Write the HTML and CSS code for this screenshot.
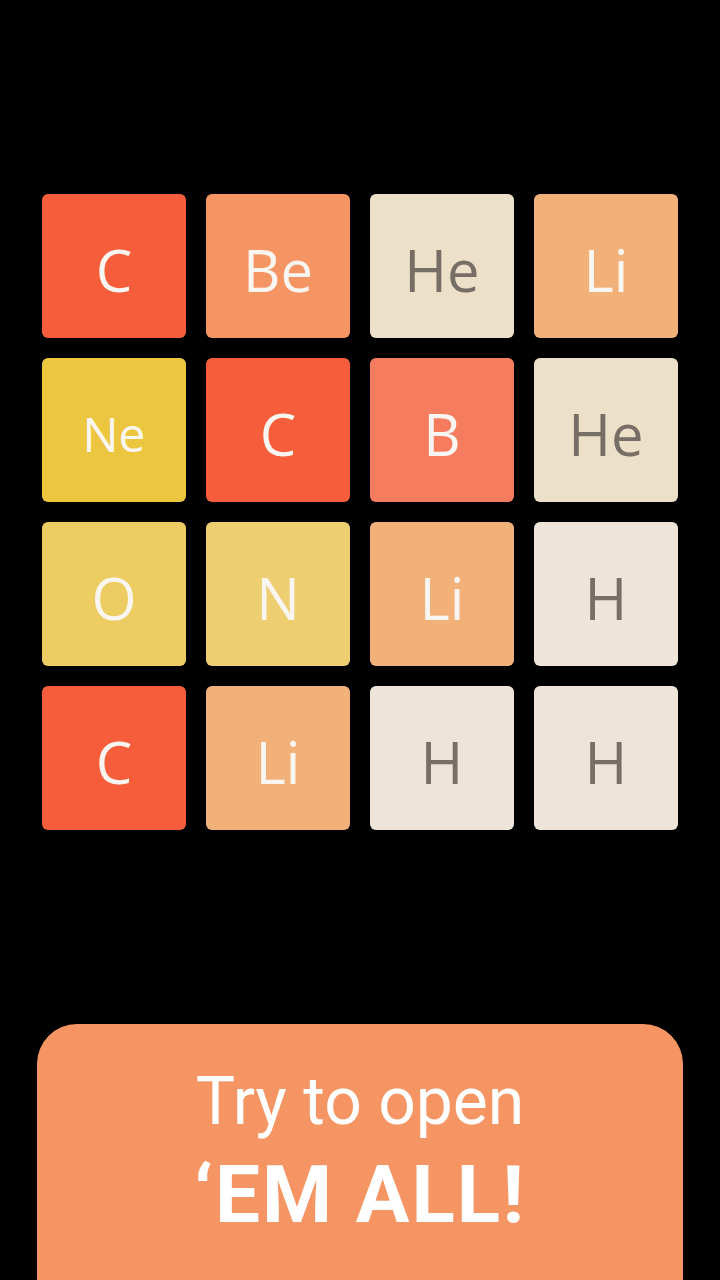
FILE: index.html
```html
<!DOCTYPE html>
<html>
<head>
<meta charset="utf-8">
<link rel="stylesheet" href="styles.css">
</head>
<body>
<div class="page">
  <div class="board">
    <div class="tile t64">C</div>
    <div class="tile t16">Be</div>
    <div class="tile t4">He</div>
    <div class="tile t8">Li</div>
    <div class="tile t512 small">Ne</div>
    <div class="tile t64">C</div>
    <div class="tile t32">B</div>
    <div class="tile t4">He</div>
    <div class="tile t256">O</div>
    <div class="tile t128">N</div>
    <div class="tile t8">Li</div>
    <div class="tile t2">H</div>
    <div class="tile t64">C</div>
    <div class="tile t8">Li</div>
    <div class="tile t2">H</div>
    <div class="tile t2">H</div>
  </div>
  <div class="promo">
    <div class="line1">Try to open</div>
    <div class="line2">‘EM ALL!</div>
  </div>
</div>
</body>
</html>
```
FILE: styles.css
```css
html, body {
  margin: 0;
  padding: 0;
  background: #000;
}
.page {
  width: 720px;
  height: 1280px;
  overflow: hidden;
  display: flex;
  flex-direction: column;
  align-items: center;
  font-family: "Open Sans", "Noto Sans", sans-serif;
}
.board {
  margin-top: 194px;
  display: grid;
  grid-template-columns: repeat(4, 144px);
  grid-auto-rows: 144px;
  gap: 20px;
}
.tile {
  border-radius: 6px;
  display: flex;
  align-items: center;
  justify-content: center;
  font-size: 58px;
  color: #f9f6f2;
  padding-top: 6px;
  box-sizing: border-box;
}
.tile.small { font-size: 48px; }
.t2 { background: #eee4da; color: #776e65; }
.t4 { background: #ede0c8; color: #776e65; }
.t8 { background: #f2b179; }
.t16 { background: #f59563; }
.t32 { background: #f67c5f; }
.t64 { background: #f65e3b; }
.t128 { background: #edcf72; }
.t256 { background: #edcc61; }
.t512 { background: #edc63f; }
.promo {
  margin-top: 194px;
  width: 646px;
  flex: 1;
  background: #f59563;
  border-radius: 40px 40px 0 0;
  color: #fff;
  text-align: center;
  font-family: "Roboto", sans-serif;
  padding-top: 40px;
  box-sizing: border-box;
}
.line1 {
  font-size: 66px;
  line-height: 76px;
}
.line2 {
  font-size: 80px;
  line-height: 110px;
  font-weight: 700;
  letter-spacing: 2px;
}
```
